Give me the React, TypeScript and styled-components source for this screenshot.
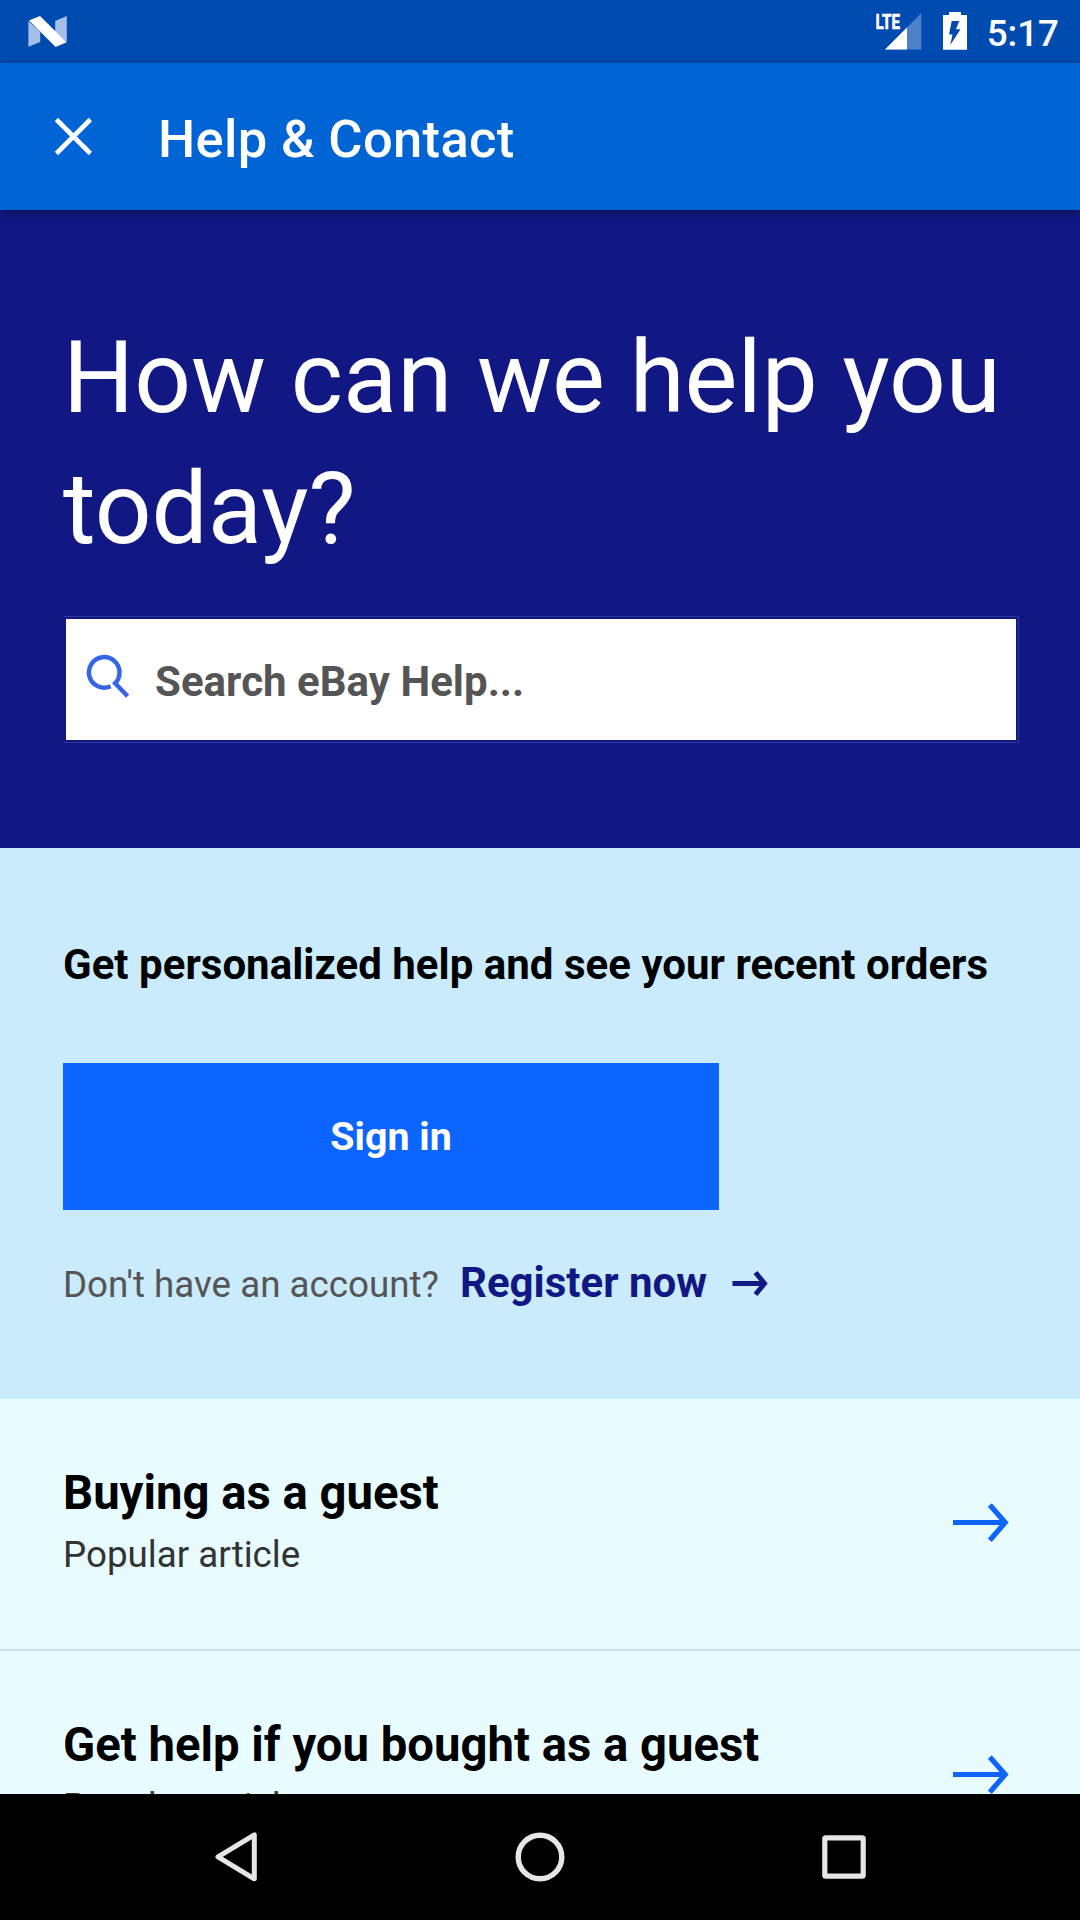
import React from "react";
import styled, { createGlobalStyle } from "styled-components";

const GlobalStyle = createGlobalStyle`
  * { box-sizing: border-box; }
  body { margin: 0; background: #000; }
  h1, h2, h3, p { margin: 0; }
`;

const Screen = styled.div`
  width: 1080px;
  height: 1920px;
  display: flex;
  flex-direction: column;
  overflow: hidden;
  font-family: Roboto, "Liberation Sans", sans-serif;
`;

const StatusBar = styled.div`
  flex: none;
  height: 63px;
  display: flex;
  justify-content: space-between;
  padding: 0 21px 0 28px;
  background: #004bb0;
`;

const StatusGroup = styled.div`
  display: flex;
  gap: 21px;
`;

const Clock = styled.span`
  margin-left: -1px;
  font-size: 36.75px;
  font-weight: 500;
  line-height: 67px;
  color: #fff;
`;

const AppBar = styled.header`
  flex: none;
  height: 147px;
  display: flex;
  align-items: center;
  padding-left: 54px;
  gap: 64px;
  background: #0164d4;
  box-shadow: 0 2px 8px rgba(0, 0, 0, 0.4);
  z-index: 1;
`;

const AppTitle = styled.h1`
  padding-top: 4px;
  font-size: 52.5px;
  font-weight: 500;
  line-height: 60px;
  letter-spacing: 0.33px;
  color: #fff;
`;

const Content = styled.main`
  flex: 1;
  min-height: 0;
  overflow: hidden;
  background: #e8fbff;
`;

const Hero = styled.section`
  height: 638px;
  padding: 102px 61px 0 63px;
  background: #111883;
`;

const HeroTitle = styled.h2`
  font-size: 99.75px;
  font-weight: 400;
  line-height: 131.25px;
  color: #fff;
`;

const SearchFrame = styled.div`
  height: 127px;
  margin-top: 41.5px;
  padding: 2px;
  border: 1px solid #30379b;
  border-left-color: transparent;
`;

const SearchField = styled.div`
  height: 100%;
  display: flex;
  align-items: center;
  gap: 25px;
  padding-left: 20px;
  background: #fff;
`;

const Placeholder = styled.span`
  font-size: 42px;
  font-weight: 700;
  line-height: 50px;
  padding-top: 5px;
  letter-spacing: 0.03px;
  color: #555;
`;

const SignInSection = styled.section`
  height: 551px;
  padding: 87px 63px 0;
  background: #c9ebfc;
`;

const SectionTitle = styled.h2`
  font-size: 42px;
  font-weight: 700;
  line-height: 60px;
  letter-spacing: 0.02px;
  color: #000;
  white-space: nowrap;
`;

const SignInButton = styled.button`
  display: block;
  width: 656px;
  height: 147px;
  margin-top: 68px;
  padding: 0;
  border: 0;
  background: #0d65ff;
  color: #fff;
  font-family: inherit;
  font-size: 39.375px;
  font-weight: 700;
`;

const RegisterRow = styled.div`
  display: flex;
  align-items: baseline;
  margin-top: 43px;
  line-height: 60px;
`;

const RegisterHint = styled.span`
  font-size: 36.75px;
  color: #555;
`;

const RegisterLink = styled.a`
  display: flex;
  align-items: center;
  gap: 24px;
  margin-left: 21px;
  font-size: 42px;
  font-weight: 700;
  color: #111883;
`;

const Article = styled.article`
  height: 252px;
  display: flex;
  justify-content: space-between;
  padding: 64px 71px 0 63px;
  border-bottom: 2px solid #cbdeec;
`;

const ArticleTitle = styled.h3`
  font-size: 47.25px;
  font-weight: 700;
  line-height: 60px;
  color: #000;
`;

const ArticleKind = styled.p`
  margin-top: 8px;
  font-size: 36.75px;
  line-height: 48px;
  color: #333;
`;

const ArrowSlot = styled.div`
  padding-top: 40px;
`;

const NavBar = styled.nav`
  flex: none;
  height: 126px;
  display: flex;
  align-items: center;
  justify-content: space-between;
  padding: 0 210px;
  background: #000;
`;

const AndroidN = () => (
  <svg width="39" height="63" viewBox="27.8 0 39 63">
    <path d="M28.2 21L40 32V42L28.2 46.8Z" fill="#a5bfe8" />
    <path d="M55 21L66.6 16V42L55 32Z" fill="#a5bfe8" />
    <path d="M28.8 20.6L39.8 16L66.4 42.2L55.4 47Z" fill="#fff" />
  </svg>
);

const Signal = () => (
  <svg width="46" height="63" viewBox="876 0 46 63">
    <path d="M921.3 13V49.5H885Z" fill="#4d81c8" />
    <path d="M907 27.5V49.5H885Z" fill="#fff" />
    <path d="M876 13H901V29H876Z" fill="#004bb0" />
    <text
      x="875.6"
      y="28.8"
      fill="#fff"
      stroke="#fff"
      strokeWidth="0.6"
      fontSize="20.6"
      fontWeight="700"
      textLength="24.4"
      lengthAdjust="spacingAndGlyphs"
    >
      LTE
    </text>
  </svg>
);

const Battery = () => (
  <svg width="24" height="63" viewBox="943 0 24 63">
    <path d="M949 12H961V15H967V49.7H943V15H949Z" fill="#fff" />
    <path d="M951.7 21H959.2L956 29.3H960.5L950.3 45L952.5 34.5H949Z" fill="#004bb0" />
  </svg>
);

const CloseIcon = () => (
  <svg width="40" height="40" viewBox="54.6 117 40 40">
    <path d="M57 119.5L91 153.5M91 119.5L57 153.5" stroke="#fff" strokeWidth="4.6" />
  </svg>
);

const SearchIcon = () => (
  <svg width="44" height="56" viewBox="86 652 44 56">
    <path
      d="M110.6 686.3A15.3 15.3 0 1 1 119.5 672.8Q119.5 679 115.2 683.2L127.6 696.2"
      fill="none"
      stroke="#3665e6"
      strokeWidth="4.5"
    />
  </svg>
);

const SmallArrow = () => (
  <svg width="37" height="28" viewBox="731 1269.5 37 28">
    <path d="M732.5 1284H764.5M755.5 1273L764.5 1284L755.5 1295" fill="none" stroke="#111883" strokeWidth="5" />
  </svg>
);

const LargeArrow = () => (
  <svg width="56" height="40" viewBox="953 1503 56 40">
    <path d="M953 1522.5H1005M989.8 1505L1005.2 1522.5L989.8 1540.2" fill="none" stroke="#0f65fb" strokeWidth="5.2" />
  </svg>
);

const BackIcon = () => (
  <svg width="52" height="52" viewBox="210 1831 52 52">
    <path d="M254.3 1834.8V1878.8L218 1856.8Z" fill="none" stroke="#e6e6e6" strokeWidth="5" strokeLinejoin="round" />
  </svg>
);

const HomeIcon = () => (
  <svg width="52" height="52" viewBox="0 0 52 52">
    <circle cx="26" cy="26" r="21.8" fill="none" stroke="#e6e6e6" strokeWidth="5.4" />
  </svg>
);

const RecentsIcon = () => (
  <svg width="52" height="52" viewBox="818 1831 52 52">
    <rect x="824.8" y="1837.8" width="38.4" height="38.4" rx="1" fill="none" stroke="#e6e6e6" strokeWidth="5.2" />
  </svg>
);

const articles = ["Buying as a guest", "Get help if you bought as a guest"];

export default function App() {
  return (
    <Screen>
      <GlobalStyle />
      <StatusBar>
        <AndroidN />
        <StatusGroup>
          <Signal />
          <Battery />
          <Clock>5:17</Clock>
        </StatusGroup>
      </StatusBar>
      <AppBar>
        <CloseIcon />
        <AppTitle>Help &amp; Contact</AppTitle>
      </AppBar>
      <Content>
        <Hero>
          <HeroTitle>How can we help you today?</HeroTitle>
          <SearchFrame>
            <SearchField>
              <SearchIcon />
              <Placeholder>Search eBay Help...</Placeholder>
            </SearchField>
          </SearchFrame>
        </Hero>
        <SignInSection>
          <SectionTitle>Get personalized help and see your recent orders</SectionTitle>
          <SignInButton>Sign in</SignInButton>
          <RegisterRow>
            <RegisterHint>Don't have an account?</RegisterHint>
            <RegisterLink>
              Register now
              <SmallArrow />
            </RegisterLink>
          </RegisterRow>
        </SignInSection>
        {articles.map((title) => (
          <Article key={title}>
            <div>
              <ArticleTitle>{title}</ArticleTitle>
              <ArticleKind>Popular article</ArticleKind>
            </div>
            <ArrowSlot>
              <LargeArrow />
            </ArrowSlot>
          </Article>
        ))}
      </Content>
      <NavBar>
        <BackIcon />
        <HomeIcon />
        <RecentsIcon />
      </NavBar>
    </Screen>
  );
}
